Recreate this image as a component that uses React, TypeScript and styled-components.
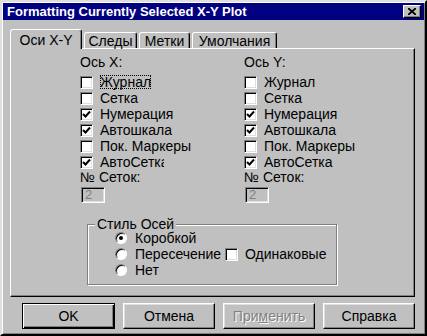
import { FC } from "react";
import styled, { createGlobalStyle } from "styled-components";

const GlobalStyle = createGlobalStyle`
  html, body {
    margin: 0;
    padding: 0;
    background: #c0c0c0;
  }
  * {
    box-sizing: border-box;
  }
`;

type Option = { label: string; checked: boolean; clip?: number; focus?: boolean };

const xOptions: Option[] = [
  { label: "Журнал", checked: false, focus: true },
  { label: "Сетка", checked: false },
  { label: "Нумерация", checked: true },
  { label: "Автошкала", checked: true },
  { label: "Пок. Маркеры", checked: false },
  { label: "АвтоСетка", checked: true, clip: 65 },
];

const yOptions: Option[] = [
  { label: "Журнал", checked: false },
  { label: "Сетка", checked: false },
  { label: "Нумерация", checked: true },
  { label: "Автошкала", checked: true },
  { label: "Пок. Маркеры", checked: false },
  { label: "АвтоСетка", checked: true },
];

const tabs = [
  { label: "Оси X-Y", width: 72 },
  { label: "Следы", width: 53 },
  { label: "Метки", width: 51 },
  { label: "Умолчания", width: 85 },
];

const Tick = () => (
  <svg width="9" height="9" viewBox="0 0 9 9">
    <polyline points="1,4 3.5,6.5 8,1.5" fill="none" stroke="#000" strokeWidth="2" />
  </svg>
);

const CheckRow: FC<{ opt: Option }> = ({ opt }) => (
  <Row>
    <Box>{opt.checked && <Tick />}</Box>
    <Label $clip={opt.clip} $focus={opt.focus}>
      {opt.label}
    </Label>
  </Row>
);

const AxisColumn: FC<{ title: string; options: Option[] }> = ({ title, options }) => (
  <Column>
    <Caption>{title}</Caption>
    <Rows>
      {options.map((o) => (
        <CheckRow key={o.label} opt={o} />
      ))}
    </Rows>
    <Caption>№ Сеток:</Caption>
    <NumberBox>2</NumberBox>
  </Column>
);

const App: FC = () => {
  return (
    <>
      <GlobalStyle />
      <Window>
        <TitleBar>
          <TitleText>Formatting Currently Selected X-Y Plot</TitleText>
          <CloseButton>
            <svg width="8" height="7" viewBox="0 0 8 7">
              <path d="M0 0 L8 7 M8 0 L0 7" stroke="#000" strokeWidth="1.8" />
            </svg>
          </CloseButton>
        </TitleBar>
        <Body>
          <TabRow>
            {tabs.map((t, i) => (
              <Tab key={t.label} $active={i === 0} $w={t.width}>
                {t.label}
              </Tab>
            ))}
          </TabRow>
          <Panel>
            <Columns>
              <AxisColumn title="Ось X:" options={xOptions} />
              <AxisColumn title="Ось Y:" options={yOptions} />
            </Columns>
            <GroupBox>
              <Legend>Стиль Осей</Legend>
              <RadioList>
                <Row>
                  <Radio $checked />
                  <RadioLabel>Коробкой</RadioLabel>
                </Row>
                <Row>
                  <Radio />
                  <RadioLabel $w={88}>Пересечение</RadioLabel>
                  <Box />
                  <Label>Одинаковые</Label>
                </Row>
                <Row>
                  <Radio />
                  <RadioLabel>Нет</RadioLabel>
                </Row>
              </RadioList>
            </GroupBox>
          </Panel>
          <ButtonRow>
            <Button $default $w={93}>OK</Button>
            <Button>Отмена</Button>
            <Button $disabled>
              При<u>м</u>енить
            </Button>
            <Button>Справка</Button>
          </ButtonRow>
        </Body>
      </Window>
    </>
  );
};

export default App;

const Window = styled.div`
  width: 427px;
  height: 336px;
  padding: 1px;
  background: #c0c0c0;
  border-top: 2px solid #dfdfdf;
  border-left: 2px solid #dfdfdf;
  border-right: 2px solid #000;
  border-bottom: 2px solid #000;
  box-shadow: inset 1px 1px #fff, inset -1px -1px #808080;
  font-family: "Liberation Sans", Arial, sans-serif;
  font-size: 14px;
  color: #000;
  display: flex;
  flex-direction: column;
`;

const TitleBar = styled.div`
  height: 17px;
  background: #000080;
  display: flex;
  align-items: center;
  justify-content: space-between;
  padding: 0 3px 0 4px;
`;

const TitleText = styled.span`
  color: #fff;
  font-weight: bold;
  font-size: 13px;
  white-space: nowrap;
`;

const CloseButton = styled.div`
  width: 18px;
  height: 13px;
  background: #c0c0c0;
  border-top: 1px solid #fff;
  border-left: 1px solid #fff;
  border-right: 1px solid #000;
  border-bottom: 1px solid #000;
  box-shadow: inset -1px -1px #808080;
  display: flex;
  align-items: center;
  justify-content: center;
`;

const Body = styled.div`
  padding: 9px 9px 0 7px;
  display: flex;
  flex-direction: column;
`;

const TabRow = styled.div`
  display: flex;
  align-items: flex-end;
  height: 19px;
  gap: 2px;
  position: relative;
  z-index: 1;
`;

const Tab = styled.div<{ $active?: boolean; $w: number }>`
  width: ${(p) => p.$w}px;
  height: ${(p) => (p.$active ? 20 : 16)}px;
  margin-bottom: ${(p) => (p.$active ? -1 : 0)}px;
  background: #c0c0c0;
  border-top: 1px solid #fff;
  border-left: 1px solid #fff;
  border-right: 1px solid #000;
  border-radius: 3px 3px 0 0;
  box-shadow: inset -1px 0 #808080;
  display: flex;
  align-items: ${(p) => (p.$active ? "flex-start" : "center")};
  justify-content: center;
  padding-top: ${(p) => (p.$active ? 2 : 0)}px;
  white-space: nowrap;
`;

const Panel = styled.div`
  width: 405px;
  height: 249px;
  border-top: 1px solid #fff;
  border-left: 1px solid #fff;
  border-right: 1px solid #000;
  border-bottom: 1px solid #000;
  box-shadow: inset -1px -1px #808080;
  padding: 6px 0 0 69px;
  display: flex;
  flex-direction: column;
`;

const Columns = styled.div`
  display: grid;
  grid-template-columns: 164px 150px;
`;

const Column = styled.div`
  display: flex;
  flex-direction: column;
  align-items: flex-start;
`;

const Caption = styled.div`
  line-height: 15px;
  height: 15px;
  white-space: nowrap;
`;

const Rows = styled.div`
  display: flex;
  flex-direction: column;
  margin: 4px 0 0;
`;

const Row = styled.div`
  height: 16px;
  display: flex;
  align-items: center;
`;

const Box = styled.div`
  width: 13px;
  height: 13px;
  flex: none;
  background: #fff;
  border-top: 1px solid #808080;
  border-left: 1px solid #808080;
  border-right: 1px solid #fff;
  border-bottom: 1px solid #fff;
  box-shadow: inset 1px 1px #000, inset -1px -1px #dfdfdf;
  display: flex;
  align-items: center;
  justify-content: center;
`;

const Label = styled.span<{ $clip?: number; $focus?: boolean }>`
  margin-left: 6px;
  padding: 0 1px;
  line-height: 16px;
  height: 16px;
  white-space: nowrap;
  overflow: hidden;
  ${(p) => (p.$clip ? `width: ${p.$clip}px;` : "")}
  outline: ${(p) => (p.$focus ? "1px dotted #000" : "none")};
  outline-offset: -2px;
`;

const NumberBox = styled.div`
  margin: 2px 0 0 1px;
  width: 24px;
  height: 16px;
  background: #c0c0c0;
  border-top: 1px solid #808080;
  border-left: 1px solid #808080;
  border-right: 1px solid #fff;
  border-bottom: 1px solid #fff;
  box-shadow: inset 1px 1px #000, inset -1px -1px #dfdfdf;
  color: #808080;
  font-size: 13px;
  line-height: 13px;
  padding-left: 3px;
`;

const GroupBox = styled.fieldset`
  margin: 15px 0 0 7px;
  width: 250px;
  height: 67px;
  padding: 0;
  border: 1px solid #808080;
  box-shadow: 1px 1px #fff, inset 1px 1px #fff;
`;

const Legend = styled.legend`
  margin-left: 7px;
  padding: 0 2px;
  line-height: 12px;
  height: 12px;
  background: #c0c0c0;
`;

const RadioList = styled.div`
  display: flex;
  flex-direction: column;
  padding-left: 27px;
`;

const Radio = styled.div<{ $checked?: boolean }>`
  width: 12px;
  height: 12px;
  flex: none;
  border-radius: 50%;
  background: #fff;
  border-top: 1px solid #808080;
  border-left: 1px solid #808080;
  border-right: 1px solid #fff;
  border-bottom: 1px solid #fff;
  box-shadow: inset 1px 1px #000;
  display: flex;
  align-items: center;
  justify-content: center;
  &::after {
    content: "";
    display: ${(p) => (p.$checked ? "block" : "none")};
    width: 4px;
    height: 4px;
    border-radius: 50%;
    background: #000;
  }
`;

const RadioLabel = styled.span<{ $w?: number }>`
  margin-left: 8px;
  white-space: nowrap;
  overflow: hidden;
  line-height: 16px;
  height: 16px;
  ${(p) => (p.$w ? `width: ${p.$w}px; margin-right: 2px;` : "")}
`;

const ButtonRow = styled.div`
  display: flex;
  justify-content: flex-end;
  gap: 8px;
  margin-top: 6px;
`;

const Button = styled.div<{ $default?: boolean; $disabled?: boolean; $w?: number }>`
  width: ${(p) => p.$w ?? 92}px;
  height: 26px;
  background: #c0c0c0;
  display: flex;
  align-items: center;
  justify-content: center;
  border: 1px solid ${(p) => (p.$default ? "#000" : "transparent")};
  border-top-color: ${(p) => (p.$default ? "#000" : "#fff")};
  border-left-color: ${(p) => (p.$default ? "#000" : "#fff")};
  border-right-color: #000;
  border-bottom-color: #000;
  box-shadow: ${(p) =>
    p.$default
      ? "inset 1px 1px #fff, inset -1px -1px #000, inset -2px -2px #808080"
      : "inset -1px -1px #808080, inset 1px 1px #dfdfdf"};
  color: ${(p) => (p.$disabled ? "#808080" : "#000")};
  text-shadow: ${(p) => (p.$disabled ? "1px 1px #fff" : "none")};
`;
